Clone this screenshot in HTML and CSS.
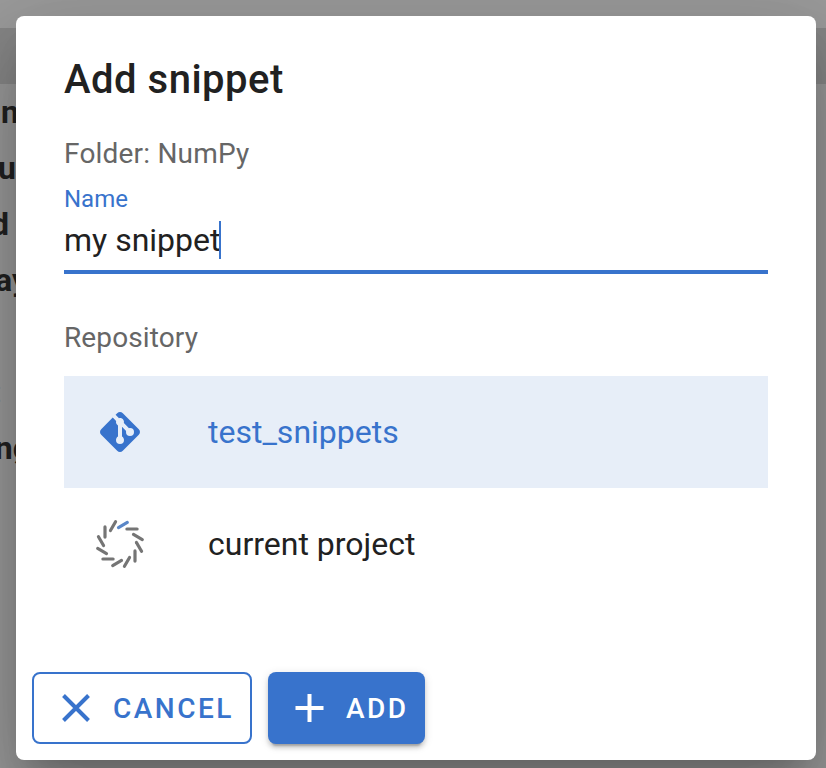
FILE: index.html
```html
<!DOCTYPE html>
<html lang="en">
<head>
<meta charset="utf-8">
<title>Add snippet</title>
<link rel="stylesheet" href="styles.css">
</head>
<body>
<div class="page">
  <div class="topbar"></div>
  <div class="toolbar"></div>
  <div class="tree">
    <div class="row r1"><span>n</span></div>
    <div class="row r2"><span>u</span></div>
    <div class="row r3"><span>d</span></div>
    <div class="row r4"><span>ay</span></div>
    <div class="row"></div>
    <div class="row faint"><span>t</span></div>
    <div class="row r7"><span>ng</span></div>
  </div>
</div>
<main class="dialog">
  <h1 class="title">Add snippet</h1>
  <div class="folder">Folder: NumPy</div>
  <div class="field">
    <div class="label">Name</div>
    <div class="value">my snippet<i class="caret"></i></div>
  </div>
  <div class="subheader">Repository</div>
  <div class="list">
    <div class="item selected">
      <svg class="icon" viewBox="0 0 24 24"><path fill="currentColor" d="M2.6,10.59L8.38,4.8L10.07,6.5C9.83,7.35 10.22,8.28 11,8.73V14.27C10.4,14.61 10,15.26 10,16A2,2 0 0,0 12,18A2,2 0 0,0 14,16C14,15.26 13.6,14.61 13,14.27V9.41L15.07,11.5C15,11.65 15,11.82 15,12A2,2 0 0,0 17,14A2,2 0 0,0 19,12A2,2 0 0,0 17,10C16.82,10 16.65,10 16.5,10.07L13.93,7.5C14.19,6.57 13.71,5.55 12.78,5.16C12.35,5 11.9,4.96 11.5,5.07L9.8,3.38L10.59,2.6C11.37,1.81 12.63,1.81 13.41,2.6L21.4,10.59C22.19,11.37 22.19,12.63 21.4,13.41L13.41,21.4C12.63,22.19 11.37,22.19 10.59,21.4L2.6,13.41C1.81,12.63 1.81,11.37 2.6,10.59Z"/></svg>
      <span>test_snippets</span>
    </div>
    <div class="item">
      <svg class="icon" viewBox="-24 -24 48 48">
        <defs><path id="dash" d="M6.9-15H17.1"/></defs>
        <g stroke="#757575" stroke-width="3.2" stroke-linecap="round">
          <use href="#dash"/>
          <use href="#dash" transform="rotate(30)"/>
          <use href="#dash" transform="rotate(60)"/>
          <use href="#dash" transform="rotate(90)"/>
          <use href="#dash" transform="rotate(120)"/>
          <use href="#dash" transform="rotate(150)"/>
          <use href="#dash" transform="rotate(180)"/>
          <use href="#dash" transform="rotate(210)"/>
          <use href="#dash" transform="rotate(240)"/>
          <use href="#dash" transform="rotate(270)"/>
          <use href="#dash" transform="rotate(300)"/>
          <use href="#dash" transform="rotate(330)" stroke="#5a87c8"/>
        </g>
      </svg>
      <span>current project</span>
    </div>
  </div>
  <div class="actions">
    <button class="btn outlined"><svg viewBox="0 0 36 36"><path d="M5.5 5.5l25 25M30.5 5.5l-25 25" stroke="currentColor" stroke-width="4"/></svg>CANCEL</button>
    <button class="btn filled"><svg viewBox="0 0 36 36"><path d="M17.5 4v28M3.5 18h28" stroke="currentColor" stroke-width="4"/></svg>ADD</button>
  </div>
</main>
</body>
</html>
```
FILE: styles.css
```css
* { box-sizing: border-box; }
html, body { margin: 0; height: 100%; overflow: hidden; }
body {
  font-family: Roboto, sans-serif;
  color: #212121;
  padding: 16px 10px 8px 16px;
}
.page { position: absolute; inset: 0; background: #999; overflow: hidden; }
.topbar { height: 28px; background: #9b9b9b; }
.toolbar { height: 56px; background: #868686; }
.row {
  width: 22px;
  height: 56px;
  display: flex;
  align-items: center;
  justify-content: flex-end;
  font-size: 32px;
  font-weight: 700;
  color: #212121;
}
.r1 { width: 19px; }
.r2 { width: 16px; }
.r3 { width: 9px; }
.r4 { width: 28px; }
.r7 { width: 31px; }
.row.faint { width: 1px; font-size: 28px; font-weight: 400; color: #777; }
.dialog {
  position: relative;
  height: 744px;
  padding: 32px 48px 16px;
  background: #fff;
  border-radius: 8px;
  display: flex;
  flex-direction: column;
  box-shadow: 0 22px 30px -14px rgba(0,0,0,.2), 0 48px 76px 6px rgba(0,0,0,.14), 0 18px 92px 16px rgba(0,0,0,.12);
}
.title { margin: 0; font-size: 40px; font-weight: 500; line-height: 64px; letter-spacing: .5px; }
.folder { margin-top: 20px; font-size: 28px; line-height: 44px; letter-spacing: .2px; color: #666; }
.field { margin-top: 8px; height: 90px; border-bottom: 4px solid #3873cc; }
.label { font-size: 24px; line-height: 30px; color: #3873cc; }
.value { display: flex; align-items: center; margin-top: 6px; font-size: 32px; line-height: 40px; }
.caret { width: 2px; height: 38px; margin-left: -1px; background: #3873cc; }
.subheader { margin-top: 42px; font-size: 28px; line-height: 44px; letter-spacing: .12px; color: #666; }
.list { margin-top: 16px; }
.item { height: 112px; padding-left: 32px; display: flex; align-items: center; gap: 64px; font-size: 32px; }
.selected { background: #e7eef8; color: #3873cc; }
.icon { width: 48px; height: 48px; flex: none; overflow: visible; }
.actions { display: flex; gap: 16px; margin: auto -32px 0; }
.btn {
  height: 72px;
  border: 0;
  border-radius: 8px;
  padding: 0;
  display: flex;
  align-items: center;
  font: 500 28px Roboto, sans-serif;
  letter-spacing: 2.5px;
}
.btn svg { width: 36px; height: 36px; flex: none; margin-right: 18px; }
.outlined { width: 220px; padding-left: 24px; border: 2px solid #3873cc; background: #fff; color: #3873cc; }
.outlined svg { margin-right: 19px; }
.filled {
  width: 157px;
  padding-left: 24px;
  background: #3873cc;
  color: #fff;
  box-shadow: 0 6px 2px -4px rgba(0,0,0,.2), 0 4px 4px rgba(0,0,0,.14), 0 2px 10px rgba(0,0,0,.12);
}
```
